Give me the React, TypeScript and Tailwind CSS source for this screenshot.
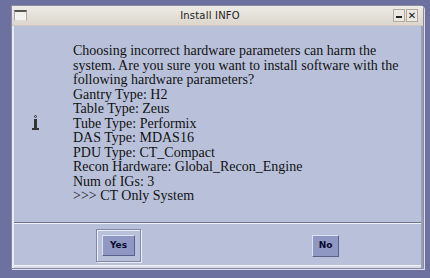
import React from "react";

export default function App() {
  const lines = [
    "Choosing incorrect hardware parameters can harm the",
    "system. Are you sure you want to install software with the",
    "following hardware parameters?",
    "Gantry Type: H2",
    "Table Type: Zeus",
    "Tube Type: Performix",
    "DAS Type: MDAS16",
    "PDU Type: CT_Compact",
    "Recon Hardware: Global_Recon_Engine",
    "Num of IGs: 3",
    ">>> CT Only System",
  ];
  return (
    <div className="w-[430px] h-[278px] bg-[#6c719f] pt-[5px] pl-[11px] overflow-hidden">
      <div className="w-[413px] h-[264px] flex flex-col bg-[#b9c1da] border border-[#8a8aa0] rounded-tr-[4px] shadow-[1px_1px_0_#dcdcec]">
        {/* title bar */}
        <div className="h-[20px] shrink-0 flex items-center bg-gradient-to-b from-[#eeebe6] to-[#dcd6cc] border-b border-[#cfc9bf] px-[2px]">
          <div className="w-[13px] h-[11px] bg-[#f4f2ee] border-t-2 border-[#555] border-x border-b border-x-[#aaa] border-b-[#ddd]" />
          <div className="flex-1 text-center text-[10px] text-[#222] font-['DejaVu_Sans',sans-serif] tracking-[0.2px]">
            Install INFO
          </div>
          <div className="flex gap-[1px] mr-[3px]">
            <div className="w-[12px] h-[13px] border border-[#b0aaa0] bg-[#ebe8e2] flex items-end justify-center pb-[3px]">
              <div className="w-[6px] h-[2px] bg-[#222]" />
            </div>
            <div className="w-[12px] h-[13px] border border-[#b0aaa0] bg-[#ebe8e2] flex items-center justify-center text-[10px] font-bold leading-none text-[#111] font-['DejaVu_Sans',sans-serif]">
              ✕
            </div>
          </div>
        </div>
        {/* body */}
        <div className="flex flex-col flex-1 border-l-2 border-l-[#e8ecf6] border-r-2 border-r-[#9aa0b8]">
          <div className="h-[197px] shrink-0 flex border-b border-b-[#6e7390]">
            <div className="w-[59px] shrink-0 flex items-center pl-[18px] pb-[4px]">
              <div className="flex flex-col items-center">
                <div className="w-[3px] h-[3px] rounded-full border border-[#333]" />
                <div className="w-[3px] h-[9px] bg-[#333] mt-[1px]" />
                <div className="w-[7px] h-[2px] bg-[#333]" />
              </div>
            </div>
            <div className="pt-[18px] text-[14px] leading-[14.5px] text-[#111] font-['Liberation_Serif',serif] whitespace-nowrap">
              {lines.map((l) => (
                <div key={l}>{l}</div>
              ))}
            </div>
          </div>
          <div className="flex-1 border-t border-t-[#f0f2fa] flex items-start pt-[5px]">
            <div className="ml-[82px] p-[5px] border border-[#8088a8] shadow-[inset_1px_1px_0_#eef0f8,1px_1px_0_#eef0f8]">
              <div className="w-[33px] h-[21px] bg-[#8f98c2] border border-t-[#dde2f2] border-l-[#dde2f2] border-r-[#5a6088] border-b-[#5a6088] flex items-center justify-center text-[9px] font-bold text-[#0a0a30] font-['DejaVu_Sans',sans-serif]">
                Yes
              </div>
            </div>
            <div className="ml-[171px] mt-[6px] w-[27px] h-[22px] bg-[#8f98c2] border border-t-[#dde2f2] border-l-[#dde2f2] border-r-[#5a6088] border-b-[#5a6088] flex items-center justify-center text-[9px] font-bold text-[#0a0a30] font-['DejaVu_Sans',sans-serif]">
              No
            </div>
          </div>
          <div className="h-[3px] shrink-0 border-t border-[#f4f6fc] bg-[#d8dcea]" />
        </div>
      </div>
    </div>
  );
}
